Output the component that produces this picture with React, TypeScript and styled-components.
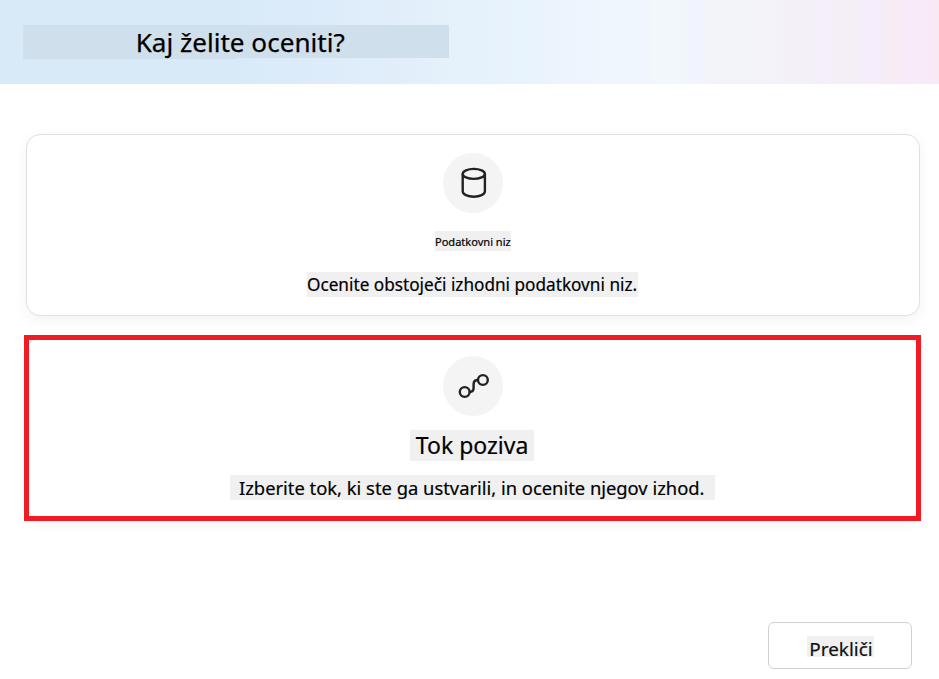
import React from "react";
import styled, { createGlobalStyle, css } from "styled-components";

const GlobalStyle = createGlobalStyle`
  * { box-sizing: border-box; }
  body {
    margin: 0;
    background: #fff;
    color: #000;
    font-family: "Noto Sans", "Open Sans", sans-serif;
  }
`;

const Dialog = styled.div`
  width: 939px;
  height: 679px;
  display: flex;
  flex-direction: column;
  overflow: hidden;
`;

const Header = styled.header`
  flex: none;
  height: 84px;
  padding: 25px 23px 0;
  background: linear-gradient(
    90deg,
    #d8eaf8 0px, #d8eaf8 236px, #dcebfa 300px, #e1eefa 390px, #e6f2fb 470px,
    #e8f3fd 532px, #ebf3fc 550px, #eff6fe 610px, #f1f6fe 649px, #f1f7fb 655px,
    #f1f7fb 680px, #f1f4fe 692px, #f2f4fa 715px, #f3f3f9 765px, #f4f1fb 778px,
    #f3f0f8 790px, #f3f0f8 812px, #f5eefb 820px, #f4eff7 834px, #f4eff7 854px,
    #f5edfb 864px, #f5edf9 880px, #f8ebf4 889px, #f8ebf4 898px, #f7eaf9 905px,
    #f7eaf9 924px, #f8e9f5 939px
  );
`;

const Title = styled.h1`
  width: 426px;
  height: 34px;
  margin: 0;
  padding-left: 112.7px;
  background: #cfdfeb;
  clip-path: polygon(0 0, 100% 0, 100% 33px, 213px 33px, 213px 34px, 0 34px);
  font-size: 26.1px;
  font-weight: 400;
  line-height: 34px;
  white-space: nowrap;
  -webkit-text-stroke: 0.25px;
`;

const Options = styled.main`
  display: flex;
  flex-direction: column;
  gap: 21px;
  padding: 50px 19px 0 26px;
`;

const Card = styled.section<{ $highlighted?: boolean }>`
  position: relative;
  height: 182px;
  display: flex;
  flex-direction: column;
  align-items: center;
  padding-top: 18px;
  background: #fff;
  border: 1px solid #e0e0e0;
  border-radius: 14px;
  box-shadow: 0 4px 14px rgba(0, 0, 0, 0.05);
  ${(p) =>
    p.$highlighted &&
    css`
      &::after {
        content: "";
        position: absolute;
        inset: -3px -2px -3px -3px;
        border: 5px solid #ef1c24;
      }
    `}
`;

const IconCircle = styled.div`
  flex: none;
  width: 60px;
  height: 60px;
  border-radius: 50%;
  background: #f4f4f4;

  svg {
    display: block;
    fill: none;
    stroke: #222;
    stroke-width: 2.4;
  }
`;

interface LabelProps {
  $width: number;
  $height: number;
  $size: number;
  $top?: number;
  $indent?: number;
  $line?: number;
  $shift?: number;
}

const Label = styled.div<LabelProps>`
  flex: none;
  width: ${(p) => p.$width}px;
  height: ${(p) => p.$height}px;
  margin-top: ${(p) => p.$top ?? 0}px;
  margin-right: ${(p) => p.$shift ?? 0}px;
  padding-left: ${(p) => p.$indent ?? 0}px;
  background: #f0f0f0;
  font-size: ${(p) => p.$size}px;
  font-weight: 400;
  line-height: ${(p) => p.$line ?? p.$height}px;
  white-space: nowrap;
  -webkit-text-stroke: 0.2px;
`;

const Footer = styled.footer`
  display: flex;
  justify-content: flex-end;
  margin-top: auto;
  padding: 0 27px 10px 0;
`;

const CancelButton = styled.button`
  display: flex;
  justify-content: flex-start;
  align-items: flex-start;
  width: 144px;
  height: 47px;
  padding: 13px 0 0 38px;
  background: #fff;
  border: 1px solid #d1d1d1;
  border-radius: 6px;
  font-family: inherit;
  color: #111;
`;

const DatabaseIcon = () => (
  <svg width="60" height="60" viewBox="0 0 60 60">
    <ellipse cx="30.8" cy="20.9" rx="11.1" ry="5" />
    <path d="M19.7 20.9V38.2C19.7 41.4 24.6 43.7 30.8 43.7S41.9 41.4 41.9 38.2V20.9" />
  </svg>
);

const FlowIcon = () => (
  <svg width="60" height="60" viewBox="0 0 60 60">
    <circle cx="21.7" cy="36" r="4.9" />
    <circle cx="39.9" cy="24" r="4.9" />
    <path d="M26.6 36C29.2 36 30.6 34.4 30.6 32V28.2C30.6 25.6 32 24 35 24" />
  </svg>
);

export default function App() {
  return (
    <>
      <GlobalStyle />
      <Dialog>
        <Header>
          <Title>Kaj želite oceniti?</Title>
        </Header>
        <Options>
          <Card>
            <IconCircle><DatabaseIcon /></IconCircle>
            <Label $width={76} $height={20} $size={11.05} $top={18} $line={22}>
              Podatkovni niz
            </Label>
            <Label $width={331} $height={25} $size={17.2} $top={21} $shift={1}>
              Ocenite obstoječi izhodni podatkovni niz.
            </Label>
          </Card>
          <Card $highlighted>
            <IconCircle><FlowIcon /></IconCircle>
            <Label $width={124} $height={31} $size={23} $top={14} $indent={5.8} $shift={2}>
              Tok poziva
            </Label>
            <Label $width={485} $height={25} $size={18.38} $top={14} $indent={9} $line={26} $shift={1}>
              Izberite tok, ki ste ga ustvarili, in ocenite njegov izhod.
            </Label>
          </Card>
        </Options>
        <Footer>
          <CancelButton type="button">
            <Label as="span" $width={67} $height={21} $size={18.9} $indent={1} $line={27}>
              Prekliči
            </Label>
          </CancelButton>
        </Footer>
      </Dialog>
    </>
  );
}
